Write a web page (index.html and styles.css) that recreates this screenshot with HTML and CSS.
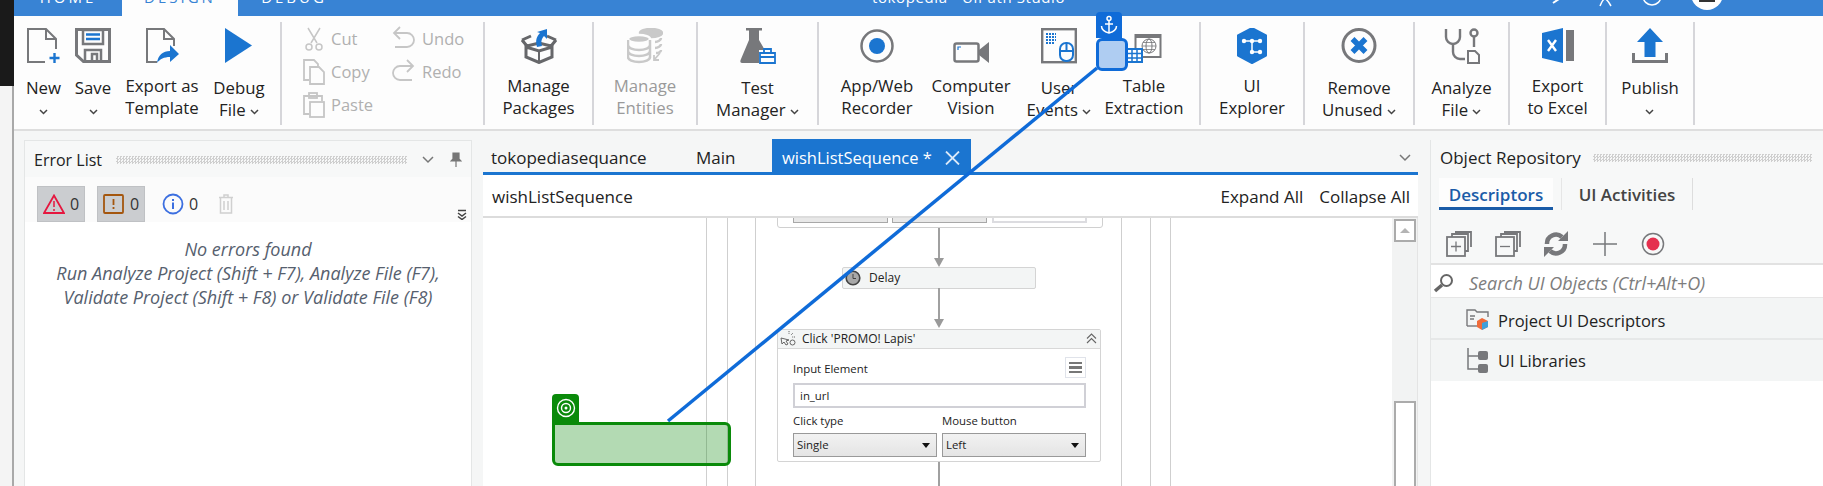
FILE: index.html
```html
<!DOCTYPE html>
<html lang="en">
<head>
<meta charset="utf-8">
<title>tokopedia - UiPath Studio</title>
<link rel="stylesheet" href="styles.css">
</head>
<body>
<div class="app">
  <div class="strip"><div class="strip-dark"></div></div>
  <div class="main">
    <header class="titlebar">
      <span class="ttab t-home"><span class="tt">HOME</span></span>
      <span class="ttab t-design"><span class="tt">DESIGN</span></span>
      <span class="ttab t-debug"><span class="tt">DEBUG</span></span>
      <span class="apptitle"><span class="tt">tokopedia - UiPath Studio</span></span>
      <svg class="ticons" width="288" height="16" viewBox="0 0 288 16">
        <path d="M18 3l6-4" stroke="#fff" stroke-width="2" fill="none"/>
        <path d="M65 6c2-5 3-7 5-7s3 2 6 7" stroke="#fff" stroke-width="1.500" fill="none"/>
        <circle cx="117" cy="-4" r="9" stroke="#fff" stroke-width="1.500" fill="none"/>
        <circle cx="172" cy="-6" r="16" fill="#fff"/>
        <rect x="164" y="0" width="16" height="2" fill="#333"/>
      </svg>
    </header>

    <nav class="ribbon">
      <section class="group g1">
        <div class="item w-new drop">
          <div class="ico"><svg width="36" height="36" viewBox="0 0 36 36" fill="none"><path d="M19 34H2V1H20L30 11V21M20 1V11H30" stroke="#77787b" stroke-width="2"/><path d="M28.500 25V35M23.500 30H33.500" stroke="#1b75d0" stroke-width="2.400"/></svg></div>
          <div class="lbl">New<br><svg class="chev" width="9" height="6" viewBox="0 0 9 6"><path d="M1 1l3.500 3.500L8 1" /></svg></div>
        </div>
        <div class="item w-save drop">
          <div class="ico"><svg width="36" height="36" viewBox="0 0 36 36" fill="none"><path d="M1.500 1.500H34.500V33.500H8.500L1.500 27Z" stroke="#77787b" stroke-width="3"/><rect x="8" y="2" width="20" height="14" stroke="#77787b" stroke-width="2.500"/><path d="M11 6.500H25M11 11H25" stroke="#1b75d0" stroke-width="2.500"/><path d="M10 33V22H26V33M17 33V26H22V33" stroke="#77787b" stroke-width="2.500"/></svg></div>
          <div class="lbl">Save<br><svg class="chev" width="9" height="6" viewBox="0 0 9 6"><path d="M1 1l3.500 3.500L8 1" /></svg></div>
        </div>
        <div class="item w-exp">
          <div class="ico"><svg width="36" height="36" viewBox="0 0 36 36" fill="none"><path d="M13 34H3V1H20L30 11V18M20 1V11H30" stroke="#77787b" stroke-width="2"/><path d="M13 35c1-8 6-12 13-12v-6l9 9-9 8v-5c-6 0-10 2-13 6z" fill="#1b75d0"/></svg></div>
          <div class="lbl">Export as<br>Template</div>
        </div>
        <div class="item w-dbg drop">
          <div class="ico"><svg width="36" height="36" viewBox="0 0 36 36"><polygon points="4,0 31,17.500 4,35" fill="#1b75d0"/></svg></div>
          <div class="lbl">Debug<br>File <svg class="chev" width="9" height="6" viewBox="0 0 9 6"><path d="M1 1l3.500 3.500L8 1" /></svg></div>
        </div>
      </section>

      <section class="group g2">
        <div class="clip">
          <div class="mini"><svg width="22" height="26" viewBox="0 0 22 26" fill="none" stroke="#c6c6c6" stroke-width="1.500"><path d="M5 2l9 15M17 2L8 17"/><circle cx="6" cy="21" r="3"/><circle cx="16" cy="21" r="3"/></svg><span>Cut</span></div>
          <div class="mini"><svg width="24" height="26" viewBox="0 0 24 26" fill="none" stroke="#c6c6c6" stroke-width="1.800"><path d="M8 1L2 7l6 6" /><path d="M2 7h13a7 7 0 0 1 0 14H3"/></svg><span>Undo</span></div>
          <div class="mini"><svg width="22" height="26" viewBox="0 0 22 26" fill="none" stroke="#c6c6c6" stroke-width="1.800"><path d="M6 21H1V1h10l4 4v3"/><path d="M7 8h9l5 5v12H7z"/></svg><span>Copy</span></div>
          <div class="mini"><svg width="24" height="26" viewBox="0 0 24 26" fill="none" stroke="#c6c6c6" stroke-width="1.800"><path d="M15 1l6 6-6 6"/><path d="M21 7H8a7 7 0 0 0 0 14h12"/></svg><span>Redo</span></div>
          <div class="mini"><svg width="22" height="26" viewBox="0 0 22 26" fill="none" stroke="#c6c6c6" stroke-width="1.800"><path d="M6 22H1V4h18v5"/><rect x="6" y="1" width="8" height="5"/><rect x="7" y="10" width="14" height="15"/></svg><span>Paste</span></div>
        </div>
      </section>

      <section class="group g3">
        <div class="item">
          <div class="ico"><svg width="36" height="36" viewBox="0 0 36 36" fill="none"><path d="M1 12L10 8M35 12l-9-4M1 12l5 6 12-3 12 3 5-6" stroke="#66676a" stroke-width="3"/><path d="M5 19V29L18 34.500 31 29V19L18 23Z" stroke="#66676a" stroke-width="3"/><path d="M18 23V34" stroke="#66676a" stroke-width="2"/><path d="M16 19C14 12 16 8 19 5L16 4 26 1 26 11 23 8C20 11 20 15 21 18Z" fill="#1b75d0"/></svg></div>
          <div class="lbl">Manage<br>Packages</div>
        </div>
      </section>

      <section class="group g4">
        <div class="item off">
          <div class="ico"><svg width="36" height="36" viewBox="0 0 36 36" fill="none" stroke="#c9c9c9" stroke-width="2.500"><ellipse cx="24" cy="5" rx="11" ry="4" fill="#c9c9c9"/><path d="M34 10c0 2-3 4-6 4M34 16c0 2-3 4-6 4M34 22c0 2-3 3-5 3"/><ellipse cx="12" cy="11" rx="11" ry="4" fill="#c9c9c9" stroke="#fdfdfd"/><path d="M1 17c0 3 5 5 11 5s11-2 11-5M1 23c0 3 5 5 11 5s11-2 11-5M1 29c0 3 5 5 11 5s11-2 11-5M1 12v18M23 12v18"/><path d="M33 25l-6 7M27 27v5h5" stroke-width="1.800"/></svg></div>
          <div class="lbl">Manage<br>Entities</div>
        </div>
      </section>

      <section class="group g5">
        <div class="item drop">
          <div class="ico"><svg width="36" height="36" viewBox="0 0 36 36"><path d="M6 0H22V2.500H19V12L26 24V26H19V35H2C0 35 0 33 1 31L9 12V2.500H6Z" fill="#77787b"/><rect x="19" y="22" width="17" height="14" fill="#fdfdfd"/><path d="M24 24V21H31V24M20 25H35V35H20ZM20 29H35" fill="none" stroke="#1b75d0" stroke-width="1.800"/></svg></div>
          <div class="lbl">Test<br>Manager <svg class="chev" width="9" height="6" viewBox="0 0 9 6"><path d="M1 1l3.500 3.500L8 1" /></svg></div>
        </div>
      </section>

      <section class="group g6">
        <div class="item w-rec">
          <div class="ico"><svg width="36" height="36" viewBox="0 0 36 36"><circle cx="18" cy="18" r="15.500" fill="none" stroke="#77787b" stroke-width="2.500"/><circle cx="18" cy="18" r="8" fill="#1b75d0"/></svg></div>
          <div class="lbl">App/Web<br>Recorder</div>
        </div>
        <div class="item w-cv">
          <div class="ico"><svg width="36" height="36" viewBox="0 0 36 36" fill="none"><rect x="1.500" y="15.500" width="24" height="18" rx="2" stroke="#77787b" stroke-width="2.500"/><polygon points="26,22 36,14 36,35 26,27" fill="#77787b"/><path d="M5 22v-3h3" stroke="#1b75d0" stroke-width="1.200"/></svg></div>
          <div class="lbl">Computer<br>Vision</div>
        </div>
        <div class="item w-ue drop">
          <div class="ico"><svg width="36" height="36" viewBox="0 0 36 36" fill="none"><rect x="1.200" y="1.200" width="33.600" height="33" stroke="#77787b" stroke-width="2.400"/><path d="M5 6h10M5 9h10M5 12h10M5 15h8" stroke="#1b75d0" stroke-width="2" stroke-dasharray="2 1"/><rect x="19" y="15" width="13" height="18" rx="6" stroke="#1b75d0" stroke-width="2"/><path d="M25.500 15v8M19 23h13" stroke="#1b75d0" stroke-width="2"/></svg></div>
          <div class="lbl">User<br>Events <svg class="chev" width="9" height="6" viewBox="0 0 9 6"><path d="M1 1l3.500 3.500L8 1" /></svg></div>
        </div>
        <div class="item w-te">
          <div class="ico"><svg width="36" height="36" viewBox="0 0 36 36" fill="none"><rect x="9.500" y="7" width="25" height="22" fill="#fff" stroke="#77787b" stroke-width="2"/><rect x="9" y="6" width="26" height="4" fill="#77787b"/><circle cx="23" cy="18" r="7" stroke="#77787b"/><ellipse cx="23" cy="18" rx="3" ry="7" stroke="#77787b"/><path d="M16 18h14M17 14.500h12M17 21.500h12" stroke="#77787b" stroke-width=".8"/><rect x="1" y="21" width="15" height="13" fill="#fff" stroke="#1b75d0" stroke-width="2"/><path d="M1 25.500h15M1 30h15M6 21v13M11 21v13" stroke="#1b75d0" stroke-width="1.500"/></svg></div>
          <div class="lbl">Table<br>Extraction</div>
        </div>
      </section>

      <section class="group g7">
        <div class="item">
          <div class="ico"><svg width="36" height="36" viewBox="0 0 36 36" fill="none"><path d="M18 0L32 7.500V27.500L18 35 4 27.500V7.500Z" fill="#1b75d0" stroke="#1b75d0" stroke-linejoin="round" stroke-width="2"/><path d="M10 13H26M18 13V24M18 24H26" stroke="#fff" stroke-width="1.500"/><circle cx="10" cy="13" r="2.200" fill="#fff"/><circle cx="26" cy="13" r="2.200" fill="#fff"/><circle cx="18" cy="13" r="2.200" fill="#fff"/><circle cx="18" cy="24" r="2.200" fill="#fff"/><circle cx="26" cy="24" r="2.200" fill="#fff"/></svg></div>
          <div class="lbl">UI<br>Explorer</div>
        </div>
      </section>

      <section class="group g8">
        <div class="item drop">
          <div class="ico"><svg width="36" height="36" viewBox="0 0 36 36" fill="none"><circle cx="18" cy="17.500" r="16" stroke="#77787b" stroke-width="3"/><path d="M11.500 11L24.500 24M24.500 11L11.500 24" stroke="#1b75d0" stroke-width="5.500"/></svg></div>
          <div class="lbl">Remove<br>Unused <svg class="chev" width="9" height="6" viewBox="0 0 9 6"><path d="M1 1l3.500 3.500L8 1" /></svg></div>
        </div>
      </section>

      <section class="group g9">
        <div class="item drop">
          <div class="ico"><svg width="36" height="36" viewBox="0 0 36 36" fill="none" stroke="#77787b" stroke-width="2.400"><path d="M2 1V9a7 7 0 0 0 14 0V1"/><path d="M9 16V24a7 7 0 0 0 7 7H21"/><circle cx="30" cy="5" r="3.500"/><path d="M30 9V19"/><path d="M24 23H31L35 27V35H24Z" stroke-width="2"/></svg></div>
          <div class="lbl">Analyze<br>File <svg class="chev" width="9" height="6" viewBox="0 0 9 6"><path d="M1 1l3.500 3.500L8 1" /></svg></div>
        </div>
      </section>

      <section class="group g10">
        <div class="item">
          <div class="ico"><svg width="36" height="36" viewBox="0 0 36 36" fill="none"><polygon points="2,5 23,0 23,35 2,30" fill="#1b75d0"/><rect x="26" y="2" width="8" height="31" fill="#77787b"/><path d="M8 12L16 23M16 12L8 23" stroke="#fff" stroke-width="2.400"/></svg></div>
          <div class="lbl">Export<br>to Excel</div>
        </div>
      </section>

      <section class="group g11">
        <div class="item drop">
          <div class="ico"><svg width="36" height="36" viewBox="0 0 36 36" fill="none"><polygon points="18,0 31,14 23.500,14 23.500,29 12.500,29 12.500,14 5,14" fill="#1b75d0"/><path d="M1.500 25V33.500H34.500V25" stroke="#77787b" stroke-width="3"/></svg></div>
          <div class="lbl">Publish<br><svg class="chev" width="9" height="6" viewBox="0 0 9 6"><path d="M1 1l3.500 3.500L8 1" /></svg></div>
        </div>
      </section>
    </nav>

    <div class="workspace">
      <aside class="errors">
        <div class="phead ehead">
          <span class="ptitle">Error List</span><span class="grip"></span>
          <svg class="pchev" width="12" height="8" viewBox="0 0 12 8"><path d="M1 1l5 5 5-5" fill="none" stroke="#777" stroke-width="1.500"/></svg>
          <svg class="ppin" width="12" height="16" viewBox="0 0 12 16"><path d="M3 1h6v6l2 2H1l2-2zM6 9v6" fill="#777" stroke="#777" stroke-width="1.200"/></svg>
        </div>
        <div class="etools">
          <div class="ebtn on"><svg width="22" height="20" viewBox="0 0 22 20" fill="none"><path d="M11 1.500L21 19H1Z" stroke="#e5173f" stroke-width="1.800"/><path d="M11 7v6M11 15v2" stroke="#e5173f" stroke-width="1.500"/></svg><span>0</span></div>
          <div class="ebtn on"><svg width="22" height="20" viewBox="0 0 22 20" fill="none"><rect x="1" y="1" width="19" height="18" stroke="#a4560e" stroke-width="1.800" rx="1"/><path d="M10.500 5v6M10.500 13v2" stroke="#a4560e" stroke-width="1.800"/></svg><span>0</span></div>
          <div class="ebtn"><svg width="22" height="22" viewBox="0 0 22 22" fill="none"><circle cx="11" cy="11" r="9.500" stroke="#3c6fe0" stroke-width="1.800"/><path d="M11 9.500V16M11 6v2" stroke="#3c6fe0" stroke-width="2"/></svg><span>0</span></div>
          <svg class="etrash" width="16" height="20" viewBox="0 0 16 20" fill="none" stroke="#d0d0d0" stroke-width="1.500"><path d="M1 3.500H15M6 3V1h4v2M2.500 4V19h11V4M6 7v9M10 7v9"/></svg>
          <svg class="emore" width="10" height="11" viewBox="0 0 10 11" fill="none" stroke="#444" stroke-width="1.500"><path d="M1 1.500h8M1 4l4 3 4-3M1 7.500l4 3 4-3"/></svg>
        </div>
        <div class="emsg">No errors found<br>Run Analyze Project (Shift + F7), Analyze File (F7),<br>Validate Project (Shift + F8) or Validate File (F8)</div>
      </aside>

      <main class="doc">
        <div class="tabs">
          <span class="tab t1">tokopediasequance</span>
          <span class="tab t2">Main</span>
          <span class="tab active">wishListSequence *<svg class="tabx" width="15" height="14" viewBox="0 0 15 14"><path d="M1 0.500L14 13.500M14 0.500L1 13.500" stroke="#dbe9f8" stroke-width="1.800"/></svg></span>
          <svg class="tabchev" width="12" height="8" viewBox="0 0 12 8"><path d="M1 1l5 5 5-5" fill="none" stroke="#777" stroke-width="1.500"/></svg>
        </div>
        <div class="subhead">
          <span class="crumb">wishListSequence</span>
          <span class="link">Expand All</span>
          <span class="link">Collapse All</span>
        </div>
        <div class="viewport">
          <div class="canvas">
            <i class="vline v1"></i><i class="vline v2"></i><i class="vline v3"></i>
            <i class="vline v4"></i><i class="vline v5"></i><i class="vline v6"></i>
            <div class="card-top"><i class="b b1"></i><i class="b b2"></i><i class="b b3"></i></div>
            <i class="conn c1"></i><i class="arrow a1"></i>
            <div class="delay">
              <svg width="16" height="16" viewBox="0 0 16 16" fill="#a8a8a8" stroke="#444" stroke-width="1.600"><circle cx="8" cy="8" r="6.800"/><path d="M8 4v4.500h3" fill="none" stroke-width="1"/></svg>
              <span>Delay</span>
            </div>
            <i class="conn c2"></i><i class="arrow a2"></i>
            <div class="click">
              <div class="chead">
                <svg width="16" height="16" viewBox="0 0 16 16" fill="none" stroke="#666" stroke-width="1"><path d="M1 8l8 2-3 1 2 3-2 1-2-3-2 2z"/><path d="M9 1v3M13 3l-2 2M15 7h-3" stroke-dasharray="1 .8"/><circle cx="12.500" cy="12.500" r="2.500"/></svg>
                <span class="ctitle">Click 'PROMO! Lapis'</span>
                <svg class="cchev" width="11" height="11" viewBox="0 0 11 11" fill="none" stroke="#666" stroke-width="1.100"><path d="M1 5.500l4.500-4.500 4.500 4.500M1 10l4.500-4.500 4.500 4.500"/></svg>
              </div>
              <div class="cbody">
                <div class="crow"><span>Input Element</span><span class="burger"><i></i><i></i><i></i></span></div>
                <div class="cinput">in_url</div>
                <div class="cgrid">
                  <div><label>Click type</label><div class="csel">Single<b></b></div></div>
                  <div><label>Mouse button</label><div class="csel">Left<b></b></div></div>
                </div>
              </div>
            </div>
            <i class="conn c3"></i>
          </div>
          <div class="scroll"><div class="sbtn"><b></b></div><div class="sthumb"></div></div>
        </div>
      </main>

      <aside class="repo">
        <div class="phead rhead"><span class="ptitle">Object Repository</span><span class="grip"></span></div>
        <div class="rtabs"><span class="rtab sel">Descriptors</span><span class="rtab other">UI Activities</span></div>
        <div class="rtools">
          <svg width="26" height="26" viewBox="0 0 26 26" fill="none" stroke="#77787b" stroke-width="1.800"><rect x="1" y="6" width="18" height="19"/><path d="M6 6V3h16v17h-3M9 1h16v15" /><path d="M5 15.500h10M10 10.500v10" stroke-width="1.300"/></svg>
          <svg width="26" height="26" viewBox="0 0 26 26" fill="none" stroke="#77787b" stroke-width="1.800"><rect x="1" y="6" width="18" height="19"/><path d="M6 6V3h16v17h-3M9 1h16v15"/><path d="M5 15.500h10" stroke-width="1.300"/></svg>
          <svg width="26" height="26" viewBox="0 0 26 26" fill="none" stroke="#77787b" stroke-width="4.500"><path d="M4 13a9 9 0 0 1 15-7M22 13a9 9 0 0 1-15 7"/><path d="M15 10h10V0zM11 16H1v10z" fill="#77787b" stroke="none"/></svg>
          <svg width="26" height="26" viewBox="0 0 26 26" fill="none" stroke="#77787b" stroke-width="1.500"><path d="M13 1V25M1 13H25"/></svg>
          <svg width="26" height="26" viewBox="0 0 26 26" fill="none"><circle cx="13" cy="13" r="10.500" stroke="#77787b" stroke-width="1.500"/><circle cx="13" cy="13" r="6.500" fill="#e5304e"/></svg>
        </div>
        <div class="rsearch">
          <svg width="22" height="20" viewBox="0 0 22 20" fill="none" stroke="#666"><circle cx="13.500" cy="7.500" r="5.500" stroke-width="2"/><path d="M9 12L2 18" stroke-width="3.500"/></svg>
          <span>Search UI Objects (Ctrl+Alt+O)</span>
        </div>
        <div class="rrow first">
          <svg width="24" height="22" viewBox="0 0 24 22" fill="none"><path d="M1 17V1h8l2 2h11v5" stroke="#77787b" stroke-width="1.400"/><path d="M1 17h13" stroke="#77787b" stroke-width="1.400"/><path d="M4 7h5M4 10h4" stroke="#77787b" stroke-width="1.400"/><path d="M16 9l6 3v6l-6 3-5-3v-6z" fill="#ef6b3a"/><path d="M16 14l6-2v6l-6 3z" fill="#3ea0dc"/></svg>
          <span>Project UI Descriptors</span>
        </div>
        <div class="rrow">
          <svg width="24" height="26" viewBox="0 0 24 26" fill="none"><path d="M2 0V21H12M2 8H12" stroke="#77787b" stroke-width="1.500"/><rect x="12" y="3" width="10" height="9" rx="2" fill="#77787b"/><rect x="12" y="16" width="10" height="9" rx="2" fill="#77787b"/></svg>
          <span>UI Libraries</span>
        </div>
      </aside>
    </div>
  </div>
</div>

<div class="sel-anchor">
  <div class="atab"><svg width="18" height="20" viewBox="0 0 18 20" fill="none" stroke="#fff" stroke-width="1.500"><circle cx="9" cy="3.500" r="2"/><path d="M9 5.500V18M5 9h8M1.500 11c0 4 4 6 7.500 7 3.500-1 7.500-3 7.500-7"/></svg></div>
  <div class="abox"></div>
</div>
<div class="sel-target">
  <div class="gtab"><svg width="20" height="20" viewBox="0 0 20 20" fill="none" stroke="#fff" stroke-width="1.400"><circle cx="10" cy="10" r="8.500"/><circle cx="10" cy="10" r="4.500"/><circle cx="10" cy="10" r="1.500" fill="#fff" stroke="none"/></svg></div>
  <div class="gbox"></div>
</div>
<svg class="wire" width="1823" height="486" viewBox="0 0 1823 486"><line x1="1097" y1="68" x2="668" y2="421" stroke="#0f6bd8" stroke-width="3.500"/></svg>
</body>
</html>
```
FILE: styles.css
```css
* { box-sizing: border-box; }
html, body { margin: 0; padding: 0; width: 1823px; height: 486px; overflow: hidden; }
body { position: relative; font-family: "Open Sans", "Liberation Sans", sans-serif; font-size: 15px; color: #222; background: #f5f6f6; }
i, b { display: block; font-style: normal; }

.app { display: flex; width: 1823px; height: 486px; }
.strip { width: 14px; flex: none; background: #f4f4f4; border-right: 2px solid #a9a9a9; }
.strip-dark { height: 86px; background: #1a1a1a; margin-right: -2px; }
.main { flex: 1; display: flex; flex-direction: column; min-width: 0; }

.titlebar { height: 16px; flex: none; background: #3883d4; display: flex; align-items: flex-start; overflow: hidden; color: #fff; font-size: 15px; }
.ttab { height: 16px; text-align: center; display: block; letter-spacing: 3px; }
.tt { display: block; line-height: 16px; margin-top: -11px; }
.t-home { width: 108px; }
.t-design { width: 116px; background: #fdfdfd; color: #3883d4; }
.t-debug { width: 112px; }
.apptitle { margin-left: 522px; letter-spacing: .6px; white-space: nowrap; }
.ticons { margin-left: auto; flex: none; }

/* ribbon */
.ribbon { height: 115px; flex: none; display: flex; background: #fdfdfd; border-bottom: 2px solid #dedede; padding-top: 6px; }
.group { height: 103px; display: flex; border-right: 2px solid #d6d6da; flex: none; }
.g1 { width: 268px; padding-left: 5px; }
.g2 { width: 203px; }
.g3 { width: 109px; }
.g4 { width: 104px; }
.g5 { width: 121px; }
.g6 { width: 382px; padding-left: 6px; }
.g7 { width: 104px; }
.g8 { width: 110px; }
.g9 { width: 95px; }
.g10 { width: 97px; }
.g11 { width: 88px; }
.item { flex: 1; display: flex; flex-direction: column; align-items: center; text-align: center; color: #222; }
.g1 .item, .g6 .item { flex: none; }
.w-new { width: 49px; }
.w-save { width: 50px; }
.w-exp { width: 88px; }
.w-dbg { width: 66px; }
.w-rec { width: 104px; }
.w-cv { width: 84px; }
.w-ue { width: 92px; }
.w-te { width: 78px; }
.ico { height: 53px; padding-top: 6px; flex: none; display: flex; justify-content: center; }
.ico svg { display: block; }
.lbl { font-size: 16.800px; line-height: 22px; white-space: nowrap; }
.drop .lbl { padding-top: 2px; }
.off .lbl { color: #9a9a9a; }
.chev { display: inline-block; vertical-align: 1px; }
.chev path { fill: none; stroke: #444; stroke-width: 1.500; }

.clip { display: grid; grid-template-columns: 89px 80px; grid-auto-rows: 33px; padding: 0 0 0 21px; align-content: start; }
.mini { display: flex; align-items: center; gap: 6px; color: #b0b0b0; font-size: 16.500px; }
.mini svg { flex: none; }

/* workspace */
.workspace { flex: 1; display: flex; min-height: 0; padding-left: 10px; padding-top: 8px; }
.errors { width: 448px; flex: none; margin-top: 1px; background: #fff; border: 1px solid #e4e6e6; border-bottom: 0; display: flex; flex-direction: column; }
.phead { height: 36px; flex: none; display: flex; align-items: center; background: #f7f8f8; padding-left: 9px; }
.ptitle { font-size: 17px; line-height: 20px; white-space: nowrap; color: #222; }
.ehead { padding-top: 2px; }
.ehead .ptitle { font-size: 16px; }
.grip { height: 8px; margin-left: 14px; width: 291px; flex: none; background-image: repeating-conic-gradient(#cfcfcf 0 25%, transparent 0 50%); background-size: 3px 3px; }
.pchev { margin-left: 15px; }
.ppin { margin-left: 16px; }
.etools { height: 45px; flex: none; display: flex; align-items: center; background: #fbfbfb; padding: 8px 0 0 12px; position: relative; }
.ebtn { width: 48px; height: 36px; margin-right: 12px; display: flex; align-items: center; gap: 5px; padding-left: 5px; font-size: 16px; color: #333; }
.ebtn.on { background: #cbcdd0; border: 1px solid #bfc1c4; }
.etrash { margin-left: 1px; }
.emore { position: absolute; right: 4px; bottom: 2px; }
.emsg { text-align: center; font-style: italic; font-size: 18px; line-height: 24px; color: #56606e; padding-top: 15px; white-space: nowrap; }

.doc { width: 935px; flex: none; margin-left: 11px; display: flex; flex-direction: column; }
.tabs { height: 36px; flex: none; display: flex; align-items: stretch; border-bottom: 3px solid #1b75d0; font-size: 17px; position: relative; }
.tab { display: flex; align-items: center; line-height: 20px; white-space: nowrap; padding-top: 4px; }
.t1 { margin-left: 8px; width: 205px; }
.t2 { width: 76px; }
.active { background: #1b75d0; color: #fff; width: 199px; padding-left: 10px; font-size: 16.500px; }
.tabx { margin-left: 13px; flex: none; }
.tabchev { position: absolute; right: 7px; top: 15px; }
.subhead { height: 43px; flex: none; background: #fff; border-bottom: 2px solid #dcdcdc; display: flex; align-items: center; padding: 2px 8px 0 9px; font-size: 17px; }
.crumb { flex: 1; }
.link { margin-left: 16px; color: #222; font-size: 17px; }
.viewport { flex: 1; display: flex; min-height: 0; background: #fff; }
.canvas { flex: 1; position: relative; overflow: hidden; background: #fff; font-size: 12px; }
.vline { position: absolute; top: 0; bottom: 0; width: 1px; background: #cfcfcf; }
.v1 { left: 223px; }
.v2 { left: 244px; }
.v3 { left: 272px; }
.v4 { left: 638px; }
.v5 { left: 667px; }
.v6 { left: 687px; }
.card-top { position: absolute; left: 294px; top: -20px; width: 326px; height: 30px; border: 1px solid #d0d0d0; border-radius: 0 0 3px 3px; background: #fff; }
.b { position: absolute; top: 0; height: 24px; width: 95px; background: #e8e8e8; border: 1px solid #a8a8a8; }
.b1 { left: 15px; }
.b2 { left: 114px; }
.b3 { left: 214px; background: #fff; border: 2px solid #dcdce0; }
.conn { position: absolute; left: 455px; width: 1.500px; background: #a0a0a0; }
.c1 { top: 10px; height: 32px; }
.c2 { top: 70px; height: 34px; }
.c3 { top: 244px; bottom: 0; }
.arrow { position: absolute; left: 451px; width: 0; height: 0; border-left: 5px solid transparent; border-right: 5px solid transparent; border-top: 9px solid #9a9a9a; }
.a1 { top: 40px; }
.a2 { top: 101px; }
.delay { position: absolute; left: 359px; top: 49px; width: 194px; height: 22px; background: #f3f5f5; border: 1px solid #d4d4d4; border-radius: 2px; display: flex; align-items: center; padding-left: 2px; gap: 8px; color: #222; }
.delay span { line-height: 14px; }
.click { position: absolute; left: 294px; top: 111px; width: 324px; height: 133px; background: #fff; border: 1px solid #d4d4d4; border-radius: 2px; display: flex; flex-direction: column; }
.chead { height: 19px; flex: none; background: #f3f5f5; border-bottom: 1px solid #d8d8d8; display: flex; align-items: center; padding: 0 3px 2px 2px; gap: 6px; }
.ctitle { flex: 1; }
.cbody { padding: 8px 14px 0 15px; display: flex; flex-direction: column; font-size: 11.400px; }
.crow { display: flex; justify-content: space-between; height: 26px; align-items: flex-start; padding-top: 4px; }
.burger { width: 21px; height: 21px; margin-top: -4px; border: 1px solid #e0e3ea; display: flex; flex-direction: column; justify-content: center; gap: 2px; padding: 0 3px; }
.burger i { height: 2.500px; background: #777; }
.cinput { height: 25px; border: 2px solid #d0d0d6; line-height: 21px; padding-left: 5px; background: #fff; }
.cgrid { display: grid; grid-template-columns: 144px 144px; gap: 5px; margin-top: 5px; }
.cgrid label { display: block; height: 20px; line-height: 16px; }
.csel { height: 24px; border: 1px solid #999; background: linear-gradient(#f2f2f2, #e4e4e4); line-height: 22px; padding-left: 3px; position: relative; }
.csel b { position: absolute; right: 6px; top: 9px; border-left: 4px solid transparent; border-right: 4px solid transparent; border-top: 5px solid #111; }
.scroll { width: 26px; flex: none; background: #f2f3f3; padding: 1px 1px 0 2px; display: flex; flex-direction: column; position: relative; border-right: 1px solid #e4e4e4; }
.sbtn { height: 23px; border: 2px solid #ababab; background: #fff; display: flex; align-items: center; justify-content: center; }
.sbtn b { border-left: 5px solid transparent; border-right: 5px solid transparent; border-bottom: 5px solid #b4b4b4; }
.sthumb { flex: 1; margin-top: 159px; border: 2px solid #ababab; border-bottom: 0; background: #fff; }

/* repository */
.repo { flex: 1; margin-left: 12px; margin-top: 1px; display: flex; flex-direction: column; background: #fff; border-left: 1px solid #e4e6e6; min-width: 0; }
.rhead .grip { width: 219px; margin-left: 12px; }
.rtabs { height: 34px; flex: none; display: flex; align-items: flex-end; background: #f7f8f8; font-weight: 600; font-size: 17px; }
.rtab { display: flex; align-items: center; justify-content: center; height: 32px; white-space: nowrap; }
.sel { width: 114px; margin-left: 8px; padding-top: 3px; color: #1a5ca8; border-bottom: 3px solid #1a5ca8; background: #fdfdfd; }
.other { width: 132px; color: #444; margin-left: 8px; border-left: 1px solid #e6e6e6; border-right: 1px solid #ddd; }
.rtools { height: 55px; flex: none; display: flex; align-items: center; background: #f7f8f8; border-bottom: 2px solid #e2e2e2; padding: 14px 0 0 15px; gap: 22.500px; }
.rsearch { height: 33px; flex: none; background: #fff; display: flex; align-items: center; gap: 14px; padding: 3px 0 0 2px; font-style: italic; color: #7d7d7d; font-size: 18px; border-bottom: 1px solid #e6e6e6; }
.rrow { height: 41px; flex: none; background: #f3f5f5; display: flex; align-items: center; padding-left: 35px; gap: 8px; font-size: 16.500px; color: #222; }
.rrow.first { height: 42px; padding-top: 4px; border-bottom: 2px solid #e6e8e8; }

/* selection overlays */
.sel-anchor { position: absolute; left: 1096px; top: 12px; width: 32px; }
.atab { width: 26px; height: 26px; background: #0f6bd8; border-radius: 4px 4px 0 0; display: flex; align-items: center; justify-content: center; }
.abox { height: 33px; background: #afcdf2; border: 3px solid #0f6bd8; border-radius: 6px; }
.sel-target { position: absolute; left: 552px; top: 394px; width: 179px; }
.gtab { width: 27px; height: 28px; background: #0a8a0a; border-radius: 4px 4px 0 0; display: flex; align-items: center; justify-content: center; }
.gbox { height: 44px; background: rgba(20, 140, 20, .32); border: 3px solid #0a8a0a; border-radius: 0 6px 6px 6px; }
.wire { position: absolute; left: 0; top: 0; pointer-events: none; }
```
